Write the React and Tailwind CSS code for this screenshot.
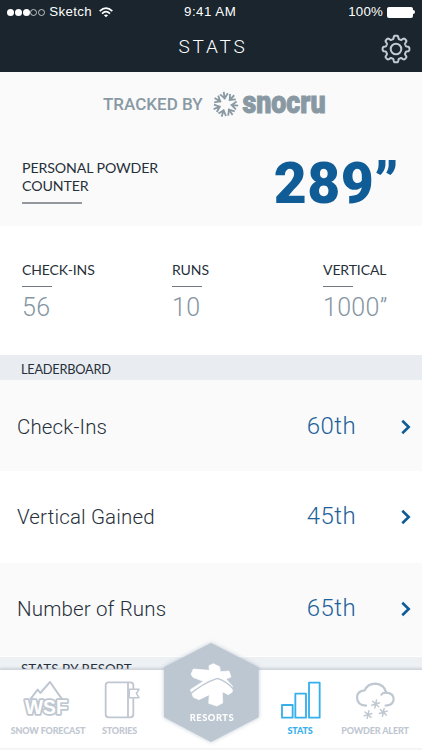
const stats = [
  { label: 'CHECK-INS', value: '56', className: 'w-[150px]' },
  { label: 'RUNS', value: '10', className: 'w-[151px]' },
  { label: 'VERTICAL', value: '1000”', className: 'flex-1' },
]

const leaderboard = [
  { label: 'Check-Ins', value: '60th', row: 'h-[91px] pt-[2px] bg-[#fafafa]' },
  { label: 'Vertical Gained', value: '45th', row: 'h-[92px] pb-px bg-white' },
  { label: 'Number of Runs', value: '65th', row: 'h-[93px] pb-px bg-[#fafafa]' },
]

// outline of an eight tooth gear around 0,0
const gearPath = () => {
  const points = []
  for (let i = 0; i < 240; i++) {
    const a = (i / 240) * Math.PI * 2
    const r = 11.8 + 1.6 * Math.tanh(2.4 * Math.cos(8 * a))
    points.push(`${(r * Math.sin(a)).toFixed(2)},${(-r * Math.cos(a)).toFixed(2)}`)
  }
  return `M${points.join('L')}Z`
}

const GearIcon = () => (
  <svg viewBox="-15 -15 30 30" className="h-[30px] w-[30px]" fill="none" stroke="#c3cad3" strokeWidth="2">
    <path d={gearPath()} />
    <circle r="5.3" />
  </svg>
)

const WifiIcon = () => (
  <svg viewBox="0 0 14 11" className="h-[11px] w-[14px]" fill="none" stroke="white" strokeWidth="1.7">
    <path d="M0.7 4.2Q7-2 13.3 4.2" />
    <path d="M3 6.6Q7 2.8 11 6.6" />
    <path d="M7 10.3L4.9 8.2Q7 6.6 9.1 8.2Z" fill="white" stroke="none" />
  </svg>
)

const SnowflakeLogo = () => (
  <svg viewBox="-14 -14 28 28" className="h-[27px] w-[27px]" fill="none" stroke="#8999a3" strokeWidth="1.9">
    {[0, 51.4, 102.9, 154.3, 205.7, 257.1, 308.6].map((angle) => (
      <path key={angle} transform={`rotate(${angle - 8})`} d="M0-5.4V-13.2M-4.1-11.2L0-6.4L4.1-11.2" />
    ))}
  </svg>
)

const ForecastIcon = () => (
  <svg viewBox="66 114 144 120" className="mr-1 h-10 w-12" fill="none" stroke="#bfc7d1" strokeWidth="6" strokeLinejoin="round">
    <path d="M90 176L113 146L121 156L150 123L187 176" />
    <text
      x="75"
      y="220"
      textLength="128"
      lengthAdjust="spacingAndGlyphs"
      fontSize="58"
      strokeWidth="11"
      paintOrder="stroke"
      fill="white"
      className="font-['Liberation_Sans',sans-serif] font-bold"
    >
      WSF
    </text>
  </svg>
)

const StoriesIcon = () => (
  <svg viewBox="306 114 120 120" className="ml-1 h-10 w-10" fill="none" stroke="#bfc7d1" strokeWidth="5.5" strokeLinejoin="round">
    <path d="M400 145V133Q400 124 391 124H326Q317 124 317 133V220Q317 229 326 229H391Q400 229 400 220V172" />
    <path d="M384 124V229" />
    <path d="M388 145H417L409 157L417 170H388Z" strokeWidth="4.5" />
  </svg>
)

const StatsIcon = () => (
  <svg viewBox="56 114 120 120" className="ml-px h-10 w-10" fill="none" stroke="#35b0ec" strokeWidth="5.5" strokeLinejoin="round">
    <rect x="59" y="192" width="32" height="38" />
    <rect x="99" y="158" width="32" height="72" />
    <rect x="140" y="125" width="32" height="105" />
  </svg>
)

const PowderIcon = () => (
  <svg viewBox="278 114 120 120" className="h-10 w-10" fill="none" stroke="#bfc7d1" strokeWidth="6.5" strokeLinecap="round">
    <path d="M311 194Q284 193 284 169Q285 149 307 148Q316 128 339 128Q365 129 372 155Q394 157 394 175Q393 192 370 194" />
    <path d="M372 155Q361 154 357 161" />
    {[[340, 189], [317, 221], [363, 214]].map(([x, y]) => (
      <path key={x} transform={`translate(${x} ${y}) rotate(12)`} strokeWidth="4.4" d="M0-12V12M-10.5-6L10.5 6M-10.5 6L10.5-6" />
    ))}
  </svg>
)

const ResortsBadge = () => (
  <svg viewBox="58 10 306 324" className="h-[108px] w-[102px] drop-shadow-[0_0_2px_rgba(150,165,180,0.6)]">
    <path d="M211 25L354 98V248L211 322L70 248V98Z" fill="#bdc7d2" />
    <path
      d="M205 93L218 87L237 96L239 111L265 109L271 127L256 133L275 154L275 172L263 180L245 171L246 205L228 214L204 206L206 180L175 195L158 188L149 165L188 140L157 128L151 119L158 103L206 107Z"
      fill="white"
      stroke="white"
      strokeWidth="2"
      strokeLinejoin="round"
    />
    <path d="M145 181Q185 146 230 131Q258 140 278 163" fill="none" stroke="#bdc7d2" strokeWidth="4" />
    <text
      x="147"
      y="260"
      textLength="132"
      fontSize="28"
      fill="white"
      className="font-['Lato',sans-serif] font-black"
    >
      RESORTS
    </text>
  </svg>
)

const Tab = ({ icon, label, className }) => (
  <div className={`flex flex-col items-center pt-[9px] ${className}`}>
    {icon}
    <span className="mt-[6px] text-[9px] leading-[12px] font-black tracking-[-0.15px] whitespace-nowrap">{label}</span>
  </div>
)

const StatusBar = () => (
  <div className="flex h-6 items-center px-[7px] text-[13.3px] text-white">
    <div className="flex w-[177px] items-center">
      <div className="flex gap-[0.8px]">
        <i className="h-[7px] w-[7px] rounded-full bg-white" />
        <i className="h-[7px] w-[7px] rounded-full bg-white" />
        <i className="h-[7px] w-[7px] rounded-full bg-white" />
        <i className="h-[7px] w-[7px] rounded-full border border-white/70" />
        <i className="h-[7px] w-[7px] rounded-full border border-white/70" />
      </div>
      <span className="mr-[7px] ml-[4px] tracking-[0.35px]">Sketch</span>
      <WifiIcon />
    </div>
    <span className="tracking-[0.5px]">9:41 AM</span>
    <div className="ml-auto flex items-center">
      <span className="mr-1 tracking-[0.2px]">100%</span>
      <i className="h-[11px] w-[26px] rounded-[2px] border border-white/60 bg-white" />
      <i className="h-1 w-[2px] rounded-r bg-white" />
    </div>
  </div>
)

const App = () => {
  return (
    <div className="flex h-[750px] w-[422px] flex-col overflow-hidden bg-white font-['Lato','Open_Sans',sans-serif] text-[#27303a]">
      <header className="h-[72px] shrink-0 bg-[#1a252e] font-['Liberation_Sans',sans-serif]">
        <StatusBar />
        <div className="grid grid-cols-[1fr_auto_1fr] items-center pt-[10px]">
          <span />
          <h1 className="pb-[4px] pl-[4px] font-['Roboto',sans-serif] text-[19px] leading-[26px] font-light tracking-[2.8px] text-white">
            STATS
          </h1>
          <div className="mr-[11px] h-[30px] justify-self-end">
            <GearIcon />
          </div>
        </div>
      </header>

      <main className="h-[597px] shrink-0 overflow-hidden">
        <section className="h-[154px] bg-[#fafafa]">
          <div className="flex h-[64px] items-center pl-[103px] text-[#8999a3]">
            <span className="w-[109px] pt-px font-['Roboto',sans-serif] text-[17px] font-medium whitespace-nowrap">
              TRACKED BY
            </span>
            <SnowflakeLogo />
            <svg viewBox="0 0 86 26" className="ml-[2px] h-[26px] w-[86px] overflow-visible">
              <text
                x="1.5"
                y="21.5"
                textLength="83"
                lengthAdjust="spacingAndGlyphs"
                fontSize="31"
                fill="#8999a3"
                stroke="#8999a3"
                strokeWidth="1"
                className="font-['Roboto',sans-serif] font-black"
              >
                snocru
              </text>
            </svg>
          </div>
          <div className="flex justify-between pr-[23px] pl-[22px]">
            <div className="pt-[23px] text-[14.2px] leading-[18px] tracking-[-0.12px]">
              <p>PERSONAL POWDER</p>
              <p>COUNTER</p>
              <div className="mt-[7px] h-[1.5px] w-[60px] bg-[#94989d]" />
            </div>
            <p className="pt-[18px] font-['Roboto',sans-serif] text-[57px] leading-[60px] font-black tracking-[0.4px] text-[#0f5c96]">
              289”
            </p>
          </div>
        </section>

        <section className="flex h-[129px] pt-[35px] pl-[22px]">
          {stats.map((stat) => (
            <div key={stat.label} className={stat.className}>
              <p className="text-[14px] leading-[18px] tracking-[-0.1px]">{stat.label}</p>
              <div className="mt-[7px] h-px w-[30px] bg-[#707983]" />
              <p className="mt-[6px] font-['Roboto',sans-serif] text-[25px] leading-[30px] font-light tracking-[0.3px] text-[#8595a3]">
                {stat.value}
              </p>
            </div>
          ))}
        </section>

        <h2 className="h-[25px] bg-[#e9ecf0] pl-[21px] text-[12.8px] leading-[28px] tracking-[-0.25px]">LEADERBOARD</h2>

        {leaderboard.map((item) => (
          <div key={item.label} className={`flex items-center pr-[11px] pl-[17px] ${item.row}`}>
            <span className="pt-px font-['Roboto',sans-serif] text-[20.5px] font-light tracking-[0.15px]">
              {item.label}
            </span>
            <span className="ml-auto pb-[2px] font-['Roboto',sans-serif] text-[24px] font-light tracking-[0.4px] text-[#1f629a]">
              {item.value}
            </span>
            <svg viewBox="0 0 10 16" className="ml-[45px] h-4 w-[10px]" fill="none" stroke="#0f5c96" strokeWidth="2.6">
              <path d="M1.3 1.8L7.7 8L1.3 14.2" />
            </svg>
          </div>
        ))}

        <div className="h-px bg-white" />
        <h2 className="h-[25px] bg-[#edf1f4] pl-[21px] text-[13.4px] leading-[25px]">STATS BY RESORT</h2>
      </main>

      <nav className="relative flex h-[79px] shrink-0 border-t border-[#d3d7dd] bg-white text-[#bfc7d1] shadow-[0_-1px_2px_rgba(150,165,180,0.4)]">
        <Tab icon={<ForecastIcon />} label="SNOW FORECAST" className="w-[89px] pl-[7px]" />
        <Tab icon={<StoriesIcon />} label="STORIES" className="w-[61px]" />
        <div className="flex w-[122px] justify-center">
          <div className="-mt-[32px]">
            <ResortsBadge />
          </div>
        </div>
        <Tab icon={<StatsIcon />} label="STATS" className="w-14 text-[#35b0ec]" />
        <Tab icon={<PowderIcon />} label="POWDER ALERT" className="w-[94px]" />
      </nav>
      <div className="h-[2px] bg-[#f6f6f6]" />
    </div>
  )
}

export default App
